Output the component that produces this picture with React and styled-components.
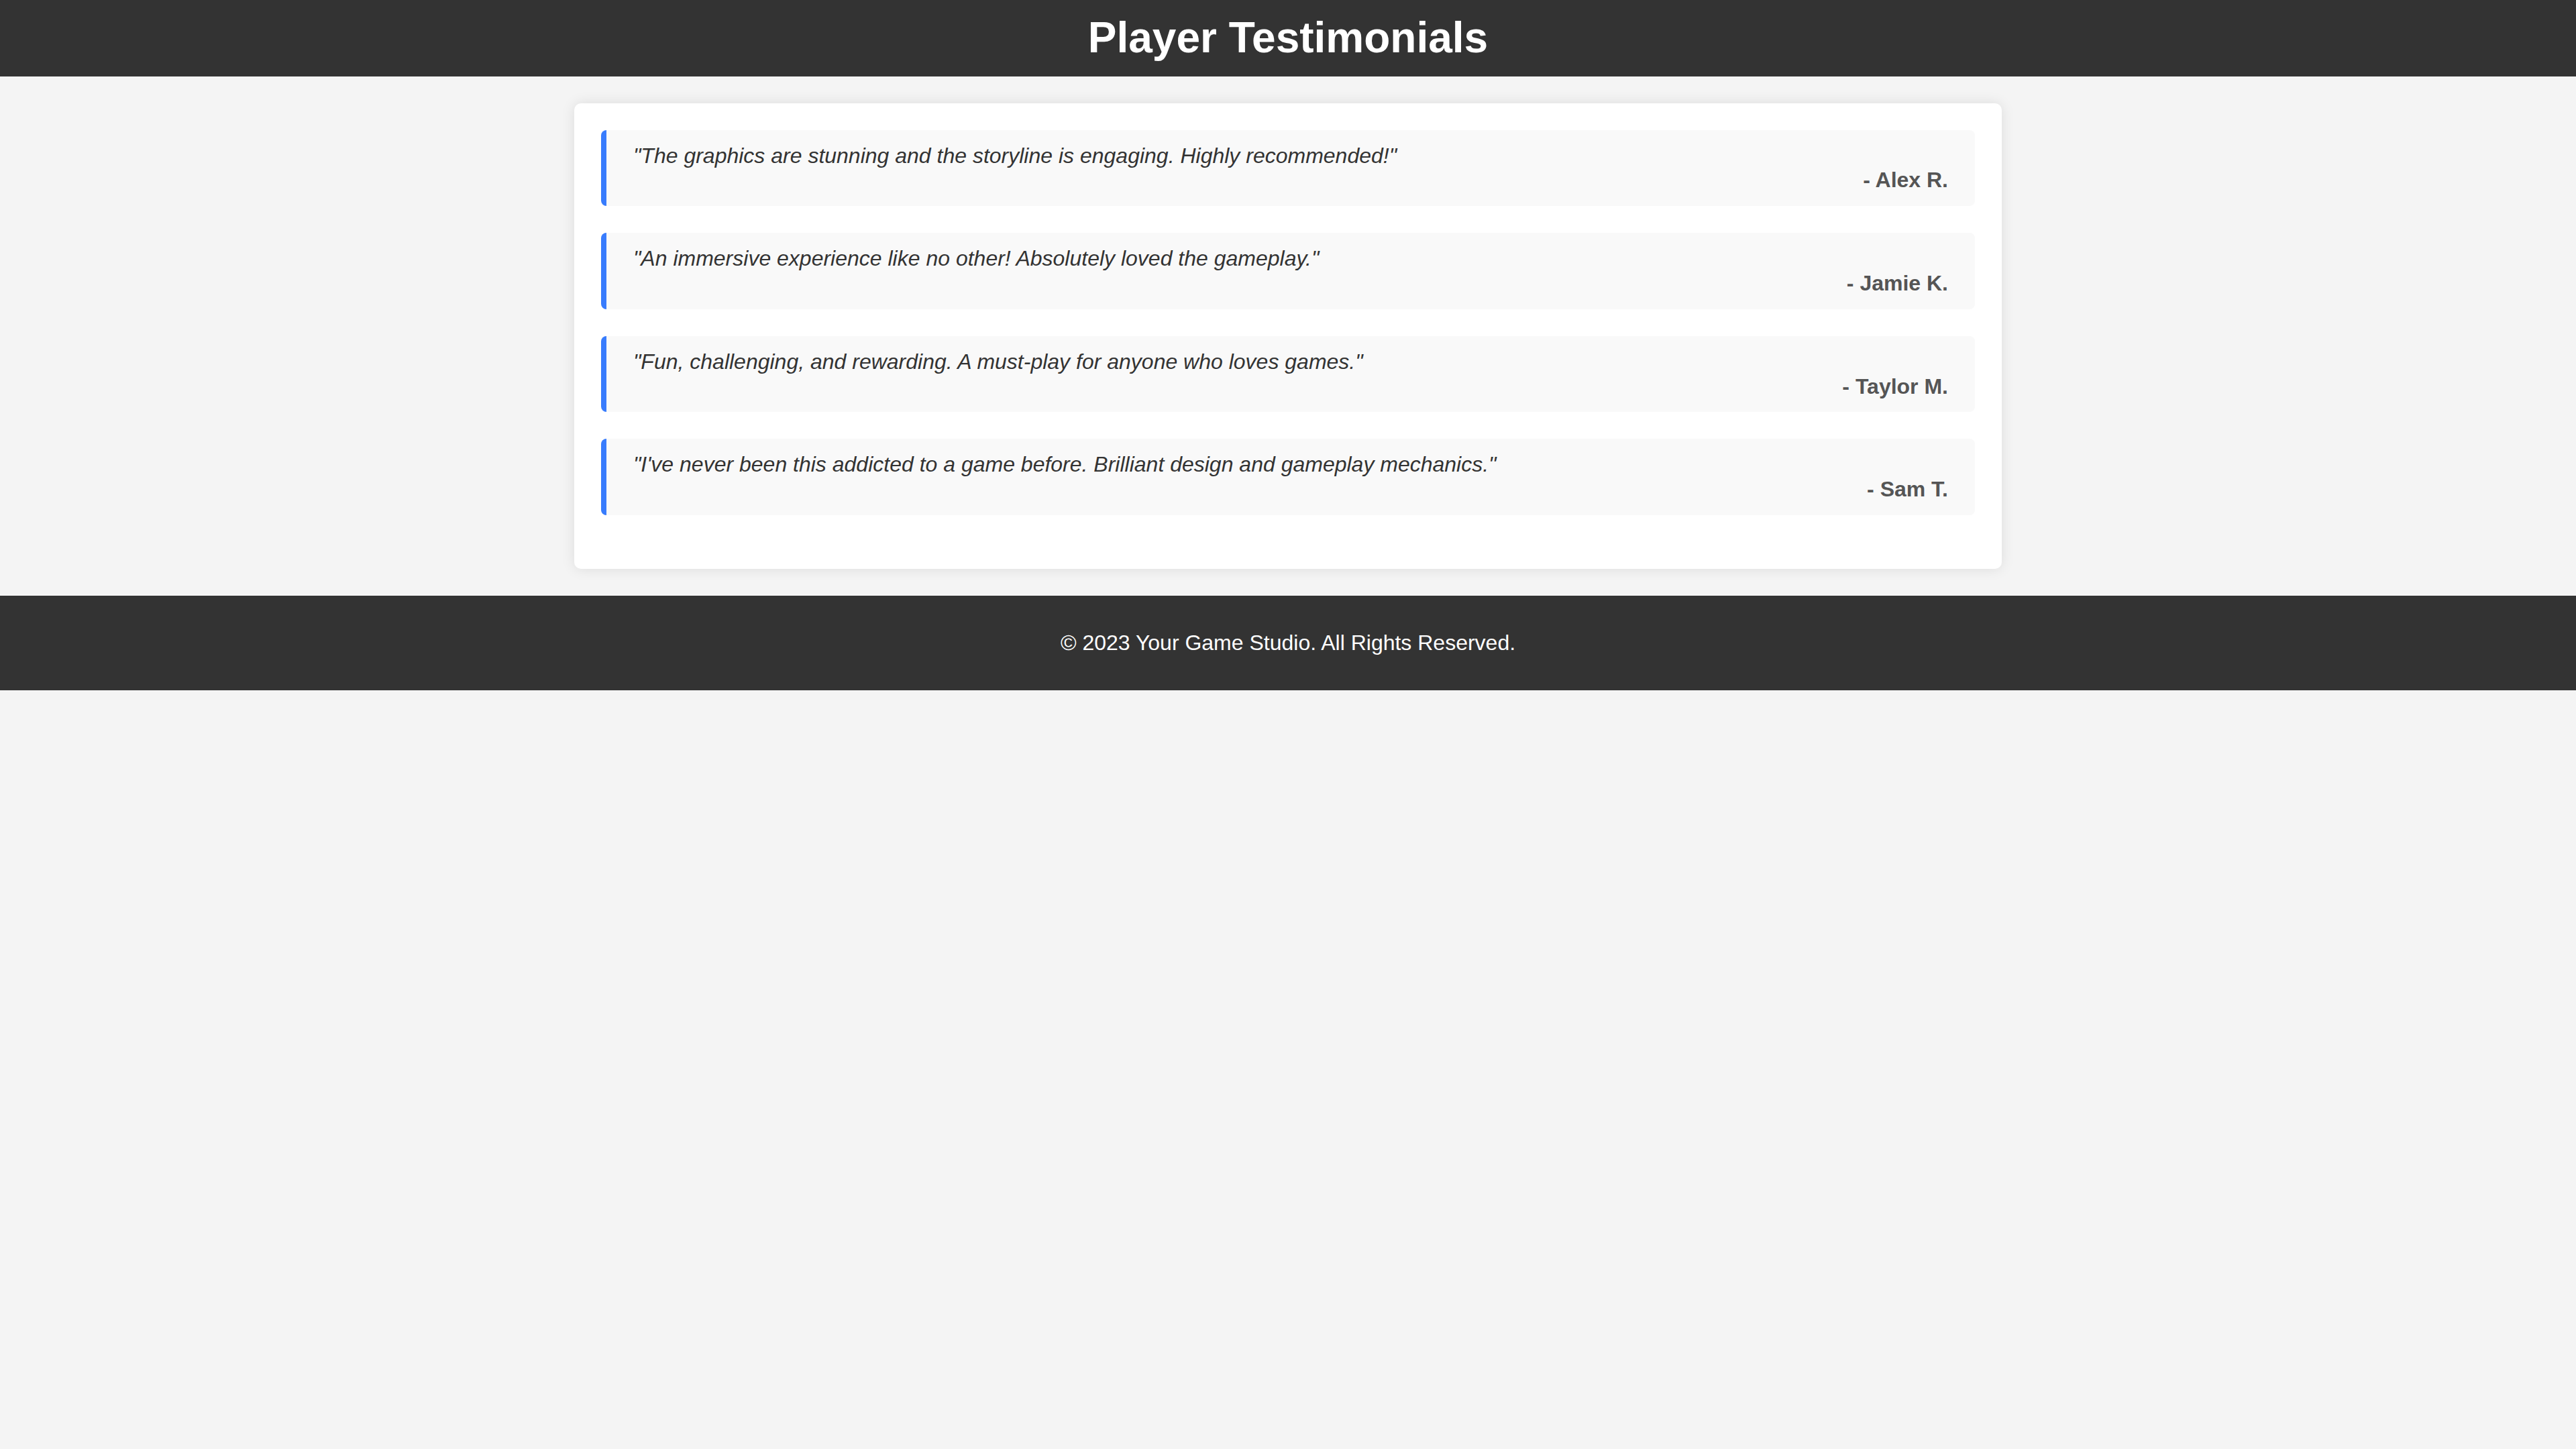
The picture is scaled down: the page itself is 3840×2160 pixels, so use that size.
import React from 'react'
import styled, { createGlobalStyle } from 'styled-components'

const GlobalStyle = createGlobalStyle`
  html, body {
    margin: 0;
    padding: 0;
    background: #f4f4f4;
    font-family: "Liberation Sans", Arial, sans-serif;
    font-size: 32px;
    line-height: 1.15;
    color: #333;
  }
`

const Header = styled.header`
  background: #333;
  color: #fff;
  text-align: center;
  padding: 20px 0;
`

const Title = styled.h1`
  margin: 0;
  font-size: 64px;
  font-weight: bold;
  line-height: 1.15;
`

const Main = styled.main`
  padding: 40px 0;
  display: flex;
  justify-content: center;
`

const Card = styled.section`
  width: 2128px;
  box-sizing: border-box;
  background: #fff;
  padding: 40px;
  border-radius: 10px;
  box-shadow: 0 0 20px rgba(0, 0, 0, 0.1);
  display: flex;
  flex-direction: column;
`

const Testimonial = styled.blockquote`
  margin: 0 0 40px;
  padding: 20px 40px;
  background: #f9f9f9;
  border-left: 8px solid #387cfd;
  border-radius: 8px;
  display: flex;
  flex-direction: column;
`

const Quote = styled.p`
  margin: 0;
  font-style: italic;
  color: #333;
`

const Author = styled.cite`
  font-style: normal;
  font-weight: bold;
  color: #555;
  text-align: right;
`

const Footer = styled.footer`
  background: #333;
  color: #fff;
  text-align: center;
  padding: 20px 0;
`

const FooterText = styled.p`
  margin: 32px 0;
`

const testimonials = [
  {
    quote: '"The graphics are stunning and the storyline is engaging. Highly recommended!"',
    author: '- Alex R.',
  },
  {
    quote: '"An immersive experience like no other! Absolutely loved the gameplay."',
    author: '- Jamie K.',
  },
  {
    quote: '"Fun, challenging, and rewarding. A must-play for anyone who loves games."',
    author: '- Taylor M.',
  },
  {
    quote: '"I\'ve never been this addicted to a game before. Brilliant design and gameplay mechanics."',
    author: '- Sam T.',
  },
]

export default function App() {
  return (
    <>
      <GlobalStyle />
      <Header>
        <Title>Player Testimonials</Title>
      </Header>
      <Main>
        <Card>
          {testimonials.map((t) => (
            <Testimonial key={t.author}>
              <Quote>{t.quote}</Quote>
              <Author>{t.author}</Author>
            </Testimonial>
          ))}
        </Card>
      </Main>
      <Footer>
        <FooterText>© 2023 Your Game Studio. All Rights Reserved.</FooterText>
      </Footer>
    </>
  )
}
